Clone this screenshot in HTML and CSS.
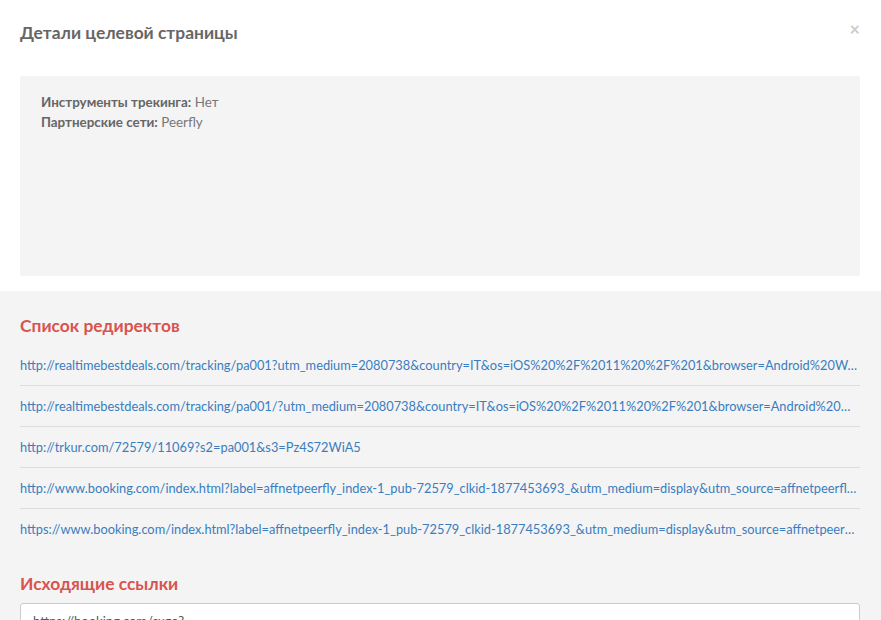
FILE: index.html
```
<!doctype html>
<html lang="ru">
<head>
  <meta charset="UTF-8">
  <title>Детали целевой страницы</title>
  <link rel="stylesheet" href="styles.css">
</head>
<body>
  <div class="modal-header">
    <h4 class="modal-title">Детали целевой страницы</h4>
    <span class="close">&times;</span>
  </div>

  <div class="details">
    <div><b>Инструменты трекинга:</b> Нет</div>
    <div><b>Партнерские сети:</b> Peerfly</div>
  </div>

  <div class="section">
    <h4 class="section-title">Список редиректов</h4>
    <ul class="redirects">
      <li><a href="#">http://realtimebestdeals.com/tracking/pa001?utm_medium=2080738&amp;country=IT&amp;os=iOS%20%2F%2011%20%2F%201&amp;browser=Android%20Webkit&amp;carrier=Wifi</a></li>
      <li><a href="#">http://realtimebestdeals.com/tracking/pa001/?utm_medium=2080738&amp;country=IT&amp;os=iOS%20%2F%2011%20%2F%201&amp;browser=Android%20Webkit&amp;carrier=Wifi</a></li>
      <li><a href="#">http://trkur.com/72579/11069?s2=pa001&amp;s3=Pz4S72WiA5</a></li>
      <li><a href="#">http://www.booking.com/index.html?label=affnetpeerfly_index-1_pub-72579_clkid-1877453693_&amp;utm_medium=display&amp;utm_source=affnetpeerfly&amp;utm_campaign=index&amp;aid=1374779</a></li>
      <li><a href="#">https://www.booking.com/index.html?label=affnetpeerfly_index-1_pub-72579_clkid-1877453693_&amp;utm_medium=display&amp;utm_source=affnetpeerfly&amp;utm_campaign=index&amp;aid=1374779</a></li>
    </ul>

    <h4 class="section-title outgoing">Исходящие ссылки</h4>
    <div class="link-box">https://booking.com/sxgo?</div>
  </div>
</body>
</html>
```
FILE: styles.css
```
body{
  margin: 0;
  font-family: Lato, "Noto Sans", sans-serif;
  font-size: 13px;
  color: #777;
  background: #fff;
}

.modal-header{
  display: flex;
  justify-content: space-between;
  align-items: flex-start;
  padding: 21px 20px 0 20px;
  height: 55px;
}

.modal-title{
  margin: 0;
  font-size: 17.4px;
  line-height: 24px;
  font-weight: bold;
  color: #666;
}

.close{
  font-size: 18px;
  line-height: 18px;
  font-weight: bold;
  color: #ccc;
  margin-right: 1px;
  margin-top: -1px;
}

.details{
  margin: 0 21px 15px 20px;
  height: 200px;
  box-sizing: border-box;
  padding: 16px 21px;
  background: #f4f4f4;
  border-radius: 3px;
  font-size: 13.4px;
  line-height: 20px;
}

.details b{
  color: #666;
}

.section{
  background: #f4f4f4;
  padding: 23px 21px 20px 20px;
}

.section-title{
  margin: 0 0 7px 0;
  font-size: 17.4px;
  line-height: 24px;
  font-weight: bold;
  color: #d9534f;
}

.section-title.outgoing{
  margin: 23px 0 7px 0;
}

.redirects{
  list-style: none;
  margin: 0;
  padding: 0;
}

.redirects li{
  padding: 10px 0;
  font-size: 12.8px;
  line-height: 20px;
  border-bottom: 1px solid #ddd;
  white-space: nowrap;
  overflow: hidden;
  text-overflow: ellipsis;
  color: #3a7dbf;
}

.redirects li:last-child{
  border-bottom: none;
}

.redirects a{
  color: #3a7dbf;
  text-decoration: none;
}

.link-box{
  background: #fff;
  border: 1px solid #ccc;
  border-radius: 3px;
  padding: 7px 12px;
  line-height: 20px;
  color: #555;
}
```
